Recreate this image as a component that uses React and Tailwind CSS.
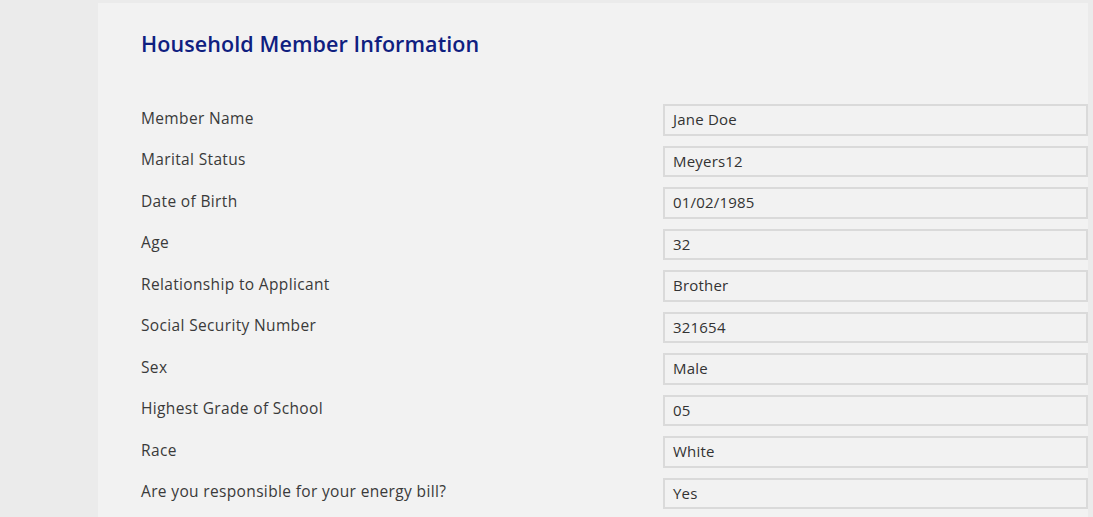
import React from "react";

const rows = [
  ["Member Name", "Jane Doe"],
  ["Marital Status", "Meyers12"],
  ["Date of Birth", "01/02/1985"],
  ["Age", "32"],
  ["Relationship to Applicant", "Brother"],
  ["Social Security Number", "321654"],
  ["Sex", "Male"],
  ["Highest Grade of School", "05"],
  ["Race", "White"],
  ["Are you responsible for your energy bill?", "Yes"],
];

export default function App() {
  return (
    <div
      className="w-[1093px] h-[517px] overflow-hidden bg-[#ebebeb] pl-[98px] pr-[5px] pt-[3px]"
      style={{ fontFamily: '"Open Sans", "Noto Sans", sans-serif' }}
    >
      <div className="h-full bg-[#f2f2f2] pl-[43px]">
        <h1 className="pt-[27px] text-[21.5px] leading-[28px] font-semibold text-[#0f2080] tracking-[0.1px]">
          Household Member Information
        </h1>
        <div className="mt-[46px] flex flex-col gap-[10px]">
          {rows.map(([label, value]) => (
            <div key={label} className="flex items-center h-[31.5px]">
              <div className="w-[522px] text-[15.5px] text-[#3a3a3a] -mt-[3px] tracking-[0.35px]">{label}</div>
              <div className="flex-1 h-full border-2 border-[#dadada] bg-[#f2f2f2] flex items-center pl-[8px] pb-[1px] text-[15px] text-[#333] tracking-[0.2px]">
                {value}
              </div>
            </div>
          ))}
        </div>
      </div>
    </div>
  );
}
